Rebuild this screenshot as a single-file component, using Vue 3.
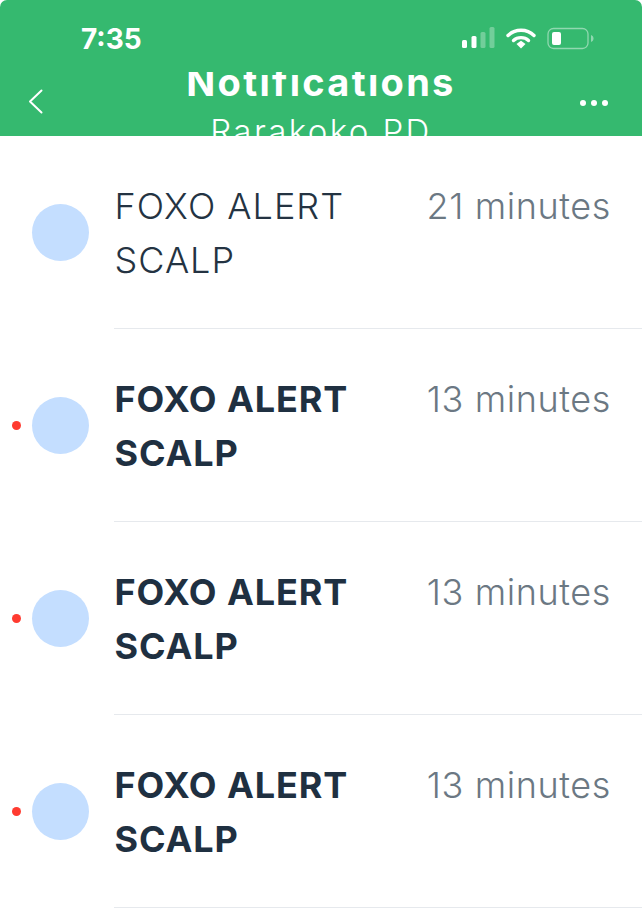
<script setup>
const rows = [
  { time: '21 minutes', unread: false },
  { time: '13 minutes', unread: true },
  { time: '13 minutes', unread: true },
  { time: '13 minutes', unread: true },
]
</script>

<template>
  <div class="screen">
    <header class="header">
      <div class="status">
        <span class="clock">7:35</span>
        <div class="status-icons">
          <svg class="signal" width="33" height="21" viewBox="0 0 33 21">
            <rect x="0" y="13" width="5" height="8" rx="1.5" fill="#fff" />
            <rect x="9.500" y="9" width="5" height="12" rx="1.500" fill="#fff" />
            <rect x="18.500" y="5" width="5" height="16" rx="1.500" fill="#fff" opacity=".3" />
            <rect x="27.500" y="0" width="5" height="21" rx="1.500" fill="#fff" opacity=".3" />
          </svg>
          <svg class="wifi" width="30" height="22" viewBox="0 0 30 22">
            <path d="M2 8.500C9 1.500 21 1.500 28 8.500" fill="none" stroke="#fff" stroke-width="3.400" stroke-linecap="round" />
            <path d="M7.500 13.500C11.500 9.700 18.500 9.700 22.500 13.500" fill="none" stroke="#fff" stroke-width="3.400" stroke-linecap="round" />
            <path d="M10.500 17L15 13.800L19.500 17L15 21.500Z" fill="#fff" />
          </svg>
          <svg class="battery" width="48" height="24" viewBox="0 0 48 24">
            <rect x="1" y="1.500" width="40" height="20" rx="5.500" fill="none" stroke="#fff" stroke-width="1.300" opacity=".45" />
            <rect x="5" y="5" width="9" height="13" rx="2" fill="#fff" />
            <path d="M44 8C46 9 46.500 10 46.500 11.500C46.500 13 46 14 44 15Z" fill="#fff" opacity=".45" />
          </svg>
        </div>
      </div>
      <div class="nav">
        <svg class="back" width="15" height="25" viewBox="0 0 15 25">
          <path d="M13.500 1.500L2 12.500L13.500 23.500" fill="none" stroke="#fff" stroke-width="2" stroke-linecap="round" stroke-linejoin="round" />
        </svg>
        <div class="titles">
          <div class="title-clip"><div class="title">Notifications</div></div>
          <div class="subtitle">Rarakoko PD</div>
        </div>
        <div class="dots"><i></i><i></i><i></i></div>
      </div>
    </header>
    <main>
      <div v-for="(row, i) in rows" :key="i" class="row">
        <div class="marker"><span v-if="row.unread" class="red"></span></div>
        <div class="avatar"></div>
        <div class="content" :class="{ bold: row.unread }">
          <div class="name">FOXO ALERT<br />SCALP</div>
          <div class="time">{{ row.time }}</div>
        </div>
      </div>
    </main>
  </div>
</template>

<style scoped>
.screen {
  width: 642px;
  height: 920px;
  overflow: hidden;
  background: #fff;
  font-family: Inter, "Open Sans", sans-serif;
}
.header {
  height: 136px;
  box-sizing: border-box;
  background: #35b96f;
  border-radius: 7px 7px 0 0;
  overflow: hidden;
  color: #fff;
}
.status {
  height: 72px;
  display: flex;
  justify-content: space-between;
  box-sizing: border-box;
  padding: 25px 47px 0 81px;
}
.clock {
  font-size: 28px;
  font-weight: 700;
  line-height: 28px;
}
.status-icons {
  display: flex;
  align-items: flex-start;
  gap: 11px;
  padding-top: 2px;
}
.nav {
  display: grid;
  grid-template-columns: 1fr 400px 1fr;
  padding: 0 28px;
}
.back { margin-top: 17px; }
.titles {
  text-align: center;
}
.title-clip {
  height: 25px;
  overflow: hidden;
}
.title {
  font-size: 38px;
  font-weight: 700;
  line-height: 38px;
  letter-spacing: 2.300px;
  margin-top: -9px;
}
.subtitle {
  font-size: 33px;
  font-weight: 300;
  letter-spacing: 2.400px;
  line-height: 36px;
  margin-top: 16px;
}
.dots {
  display: flex;
  gap: 5px;
  margin: 28px 6px 0 0;
  justify-self: end;
  align-self: start;
}
.dots i {
  width: 6px;
  height: 6px;
  border-radius: 50%;
  background: #fff;
}
.row {
  height: 193px;
  display: flex;
  align-items: center;
}
.marker {
  width: 31.500px;
  padding-left: 12px;
  box-sizing: border-box;
  flex: none;
  display: flex;
}
.red {
  width: 9px;
  height: 9px;
  border-radius: 50%;
  background: #ff3b30;
}
.avatar {
  width: 57px;
  height: 57px;
  border-radius: 50%;
  background: #c4deff;
  flex: none;
}
.content {
  flex: 1;
  height: 193px;
  box-sizing: border-box;
  margin-left: 25.500px;
  padding: 43px 31px 0 0.500px;
  border-bottom: 1px solid #e6e9ed;
  display: flex;
  justify-content: space-between;
  align-items: flex-start;
}
.name {
  font-size: 36px;
  line-height: 54px;
  font-weight: 300;
  letter-spacing: 1px;
  color: #243342;
}
.bold .name {
  font-weight: 700;
  letter-spacing: 0.900px;
  color: #1f3041;
}
.time {
  font-size: 36px;
  font-weight: 300;
  line-height: 54px;
  letter-spacing: 0.600px;
  color: #6b7883;
}
</style>
